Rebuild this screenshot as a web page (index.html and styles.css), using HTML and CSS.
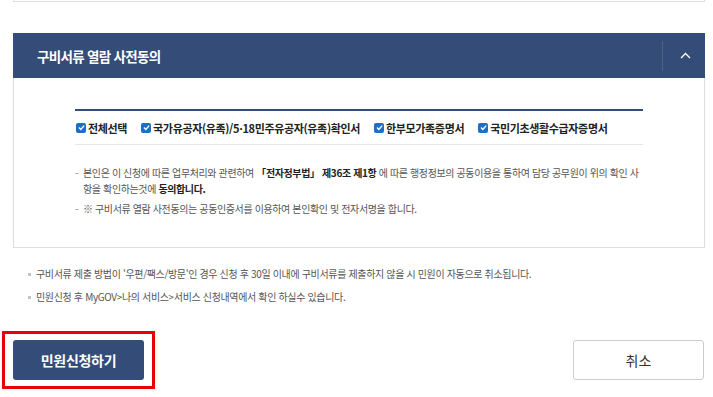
FILE: index.html
```html
<!DOCTYPE html>
<html lang="ko">
<head>
<meta charset="utf-8">
<link rel="stylesheet" href="styles.css">
</head>
<body>
<div class="page">
  <div class="prev-box"></div>

  <section class="acc">
    <div class="acc-head">
      <h2 class="acc-title">구비서류 열람 사전동의</h2>
      <button class="acc-toggle" type="button" aria-label="접기">
        <svg width="11" height="7" viewBox="0 0 11 7"><path d="M1 6 L5.5 1.5 L10 6" fill="none" stroke="#fff" stroke-width="1.4"/></svg>
      </button>
    </div>
    <div class="acc-body">
      <div class="inner">
        <div class="checks">
          <label class="chk"><span class="box"><svg width="9" height="9" viewBox="0 0 9 9"><path d="M2 4.6 L3.8 6.4 L7.2 2.6" fill="none" stroke="#fff" stroke-width="1.4"/></svg></span>전체선택</label>
          <label class="chk"><span class="box"><svg width="9" height="9" viewBox="0 0 9 9"><path d="M2 4.6 L3.8 6.4 L7.2 2.6" fill="none" stroke="#fff" stroke-width="1.4"/></svg></span>국가유공자(유족)/5·18민주유공자(유족)확인서</label>
          <label class="chk"><span class="box"><svg width="9" height="9" viewBox="0 0 9 9"><path d="M2 4.6 L3.8 6.4 L7.2 2.6" fill="none" stroke="#fff" stroke-width="1.4"/></svg></span>한부모가족증명서</label>
          <label class="chk"><span class="box"><svg width="9" height="9" viewBox="0 0 9 9"><path d="M2 4.6 L3.8 6.4 L7.2 2.6" fill="none" stroke="#fff" stroke-width="1.4"/></svg></span>국민기초생활수급자증명서</label>
        </div>
        <ul class="desc">
          <li>본인은 이 신청에 따른 업무처리와 관련하여 <b>「전자정부법」 제36조 제1항</b> 에 따른 행정정보의 공동이용을 통하여 담당 공무원이 위의 확인 사항을 확인하는것에 <b>동의합니다.</b></li>
          <li>※ 구비서류 열람 사전동의는 공동인증서를 이용하여 본인확인 및 전자서명을 합니다.</li>
        </ul>
      </div>
    </div>
  </section>

  <ul class="notes">
    <li>구비서류 제출 방법이 '우편/팩스/방문'인 경우 신청 후 30일 이내에 구비서류를 제출하지 않을 시 민원이 자동으로 취소됩니다.</li>
    <li>민원신청 후 MyGOV&gt;나의 서비스&gt;서비스 신청내역에서 확인 하실수 있습니다.</li>
  </ul>

  <div class="actions">
    <span class="focus-ring"><button class="btn btn-primary" type="button">민원신청하기</button></span>
    <button class="btn btn-cancel" type="button">취소</button>
  </div>
</div>
</body>
</html>
```

FILE: styles.css
```css
* { box-sizing: border-box; }
html, body { margin: 0; padding: 0; background: #fff; }
body {
  font-family: "Noto Sans CJK KR", "Noto Sans", sans-serif;
  color: #333;
}
.page { padding: 0 8px 0 13px; }

.prev-box {
  height: 2px;
  border: 1px solid #ddd;
  border-top: none;
}

.acc { margin-top: 31px; }
.acc-head {
  height: 45px;
  background: #344d78;
  display: flex;
  align-items: center;
  justify-content: space-between;
  padding-left: 24px;
}
.acc-title {
  margin: 0;
  color: #fff;
  font-size: 13.5px;
  font-weight: 700;
  letter-spacing: -0.7px;
}
.acc-toggle {
  width: 43px;
  height: 30px;
  border: none;
  border-left: 1px solid rgba(255,255,255,0.12);
  background: transparent;
  display: flex;
  align-items: center;
  justify-content: center;
  padding: 0;
  padding-left: 2px;
}

.acc-body {
  border: 1px solid #ddd;
  border-top: none;
  height: 170px;
  padding-top: 31px;
}
.inner {
  width: 568px;
  margin: 0 auto;
  border-top: 2px solid #344d78;
}
.checks {
  display: flex;
  align-items: center;
  height: 34px;
  border-bottom: 1px solid #e6e6e6;
  padding-left: 1px;
  font-size: 11px;
  font-weight: 700;
  color: #222;
  letter-spacing: -0.35px;
  gap: 14px;
}
.chk { display: flex; align-items: center; }
.box {
  width: 10px;
  height: 10px;
  background: #1b6fc8;
  border-radius: 2px;
  margin-right: 2px;
  display: flex;
  align-items: center;
  justify-content: center;
}
.box svg { display: block; }

.desc {
  list-style: none;
  margin: 20px 0 0;
  padding: 0;
  font-size: 10px;
  color: #555;
  letter-spacing: -0.38px;
  line-height: 16px;
}
.desc li {
  position: relative;
  padding-left: 8px;
  margin-bottom: 4px;
}
.desc li::before {
  content: "-";
  position: absolute;
  left: 0;
  top: 0;
  color: #888;
}
.desc b { color: #222; font-weight: 700; }

.notes {
  list-style: none;
  margin: 18px 0 0;
  padding: 0 0 0 23px;
  font-size: 10px;
  color: #555;
  letter-spacing: -0.35px;
  line-height: 16px;
}
.notes li {
  position: relative;
  padding-left: 0;
  margin-bottom: 7px;
}
.notes li::before {
  content: "";
  position: absolute;
  left: -8px;
  top: 7px;
  width: 3px;
  height: 3px;
  background: #c4c4c4;
}

.actions {
  display: flex;
  justify-content: space-between;
  align-items: center;
  margin-top: 26px;
  margin-left: -11px;
}
.focus-ring {
  display: inline-flex;
  border: 3px solid #e8000b;
  padding: 6px 8px;
}
.btn {
  font-family: inherit;
  font-size: 14px;
  height: 40px;
  border-radius: 3px;
  cursor: pointer;
}
.btn-primary {
  width: 131px;
  background: #344d78;
  color: #fff;
  font-weight: 700;
  border: none;
  letter-spacing: -0.3px;
}
.btn-cancel {
  width: 131px;
  background: #fff;
  color: #333;
  border: 1px solid #ccc;
  margin-right: 1px;
}
```
